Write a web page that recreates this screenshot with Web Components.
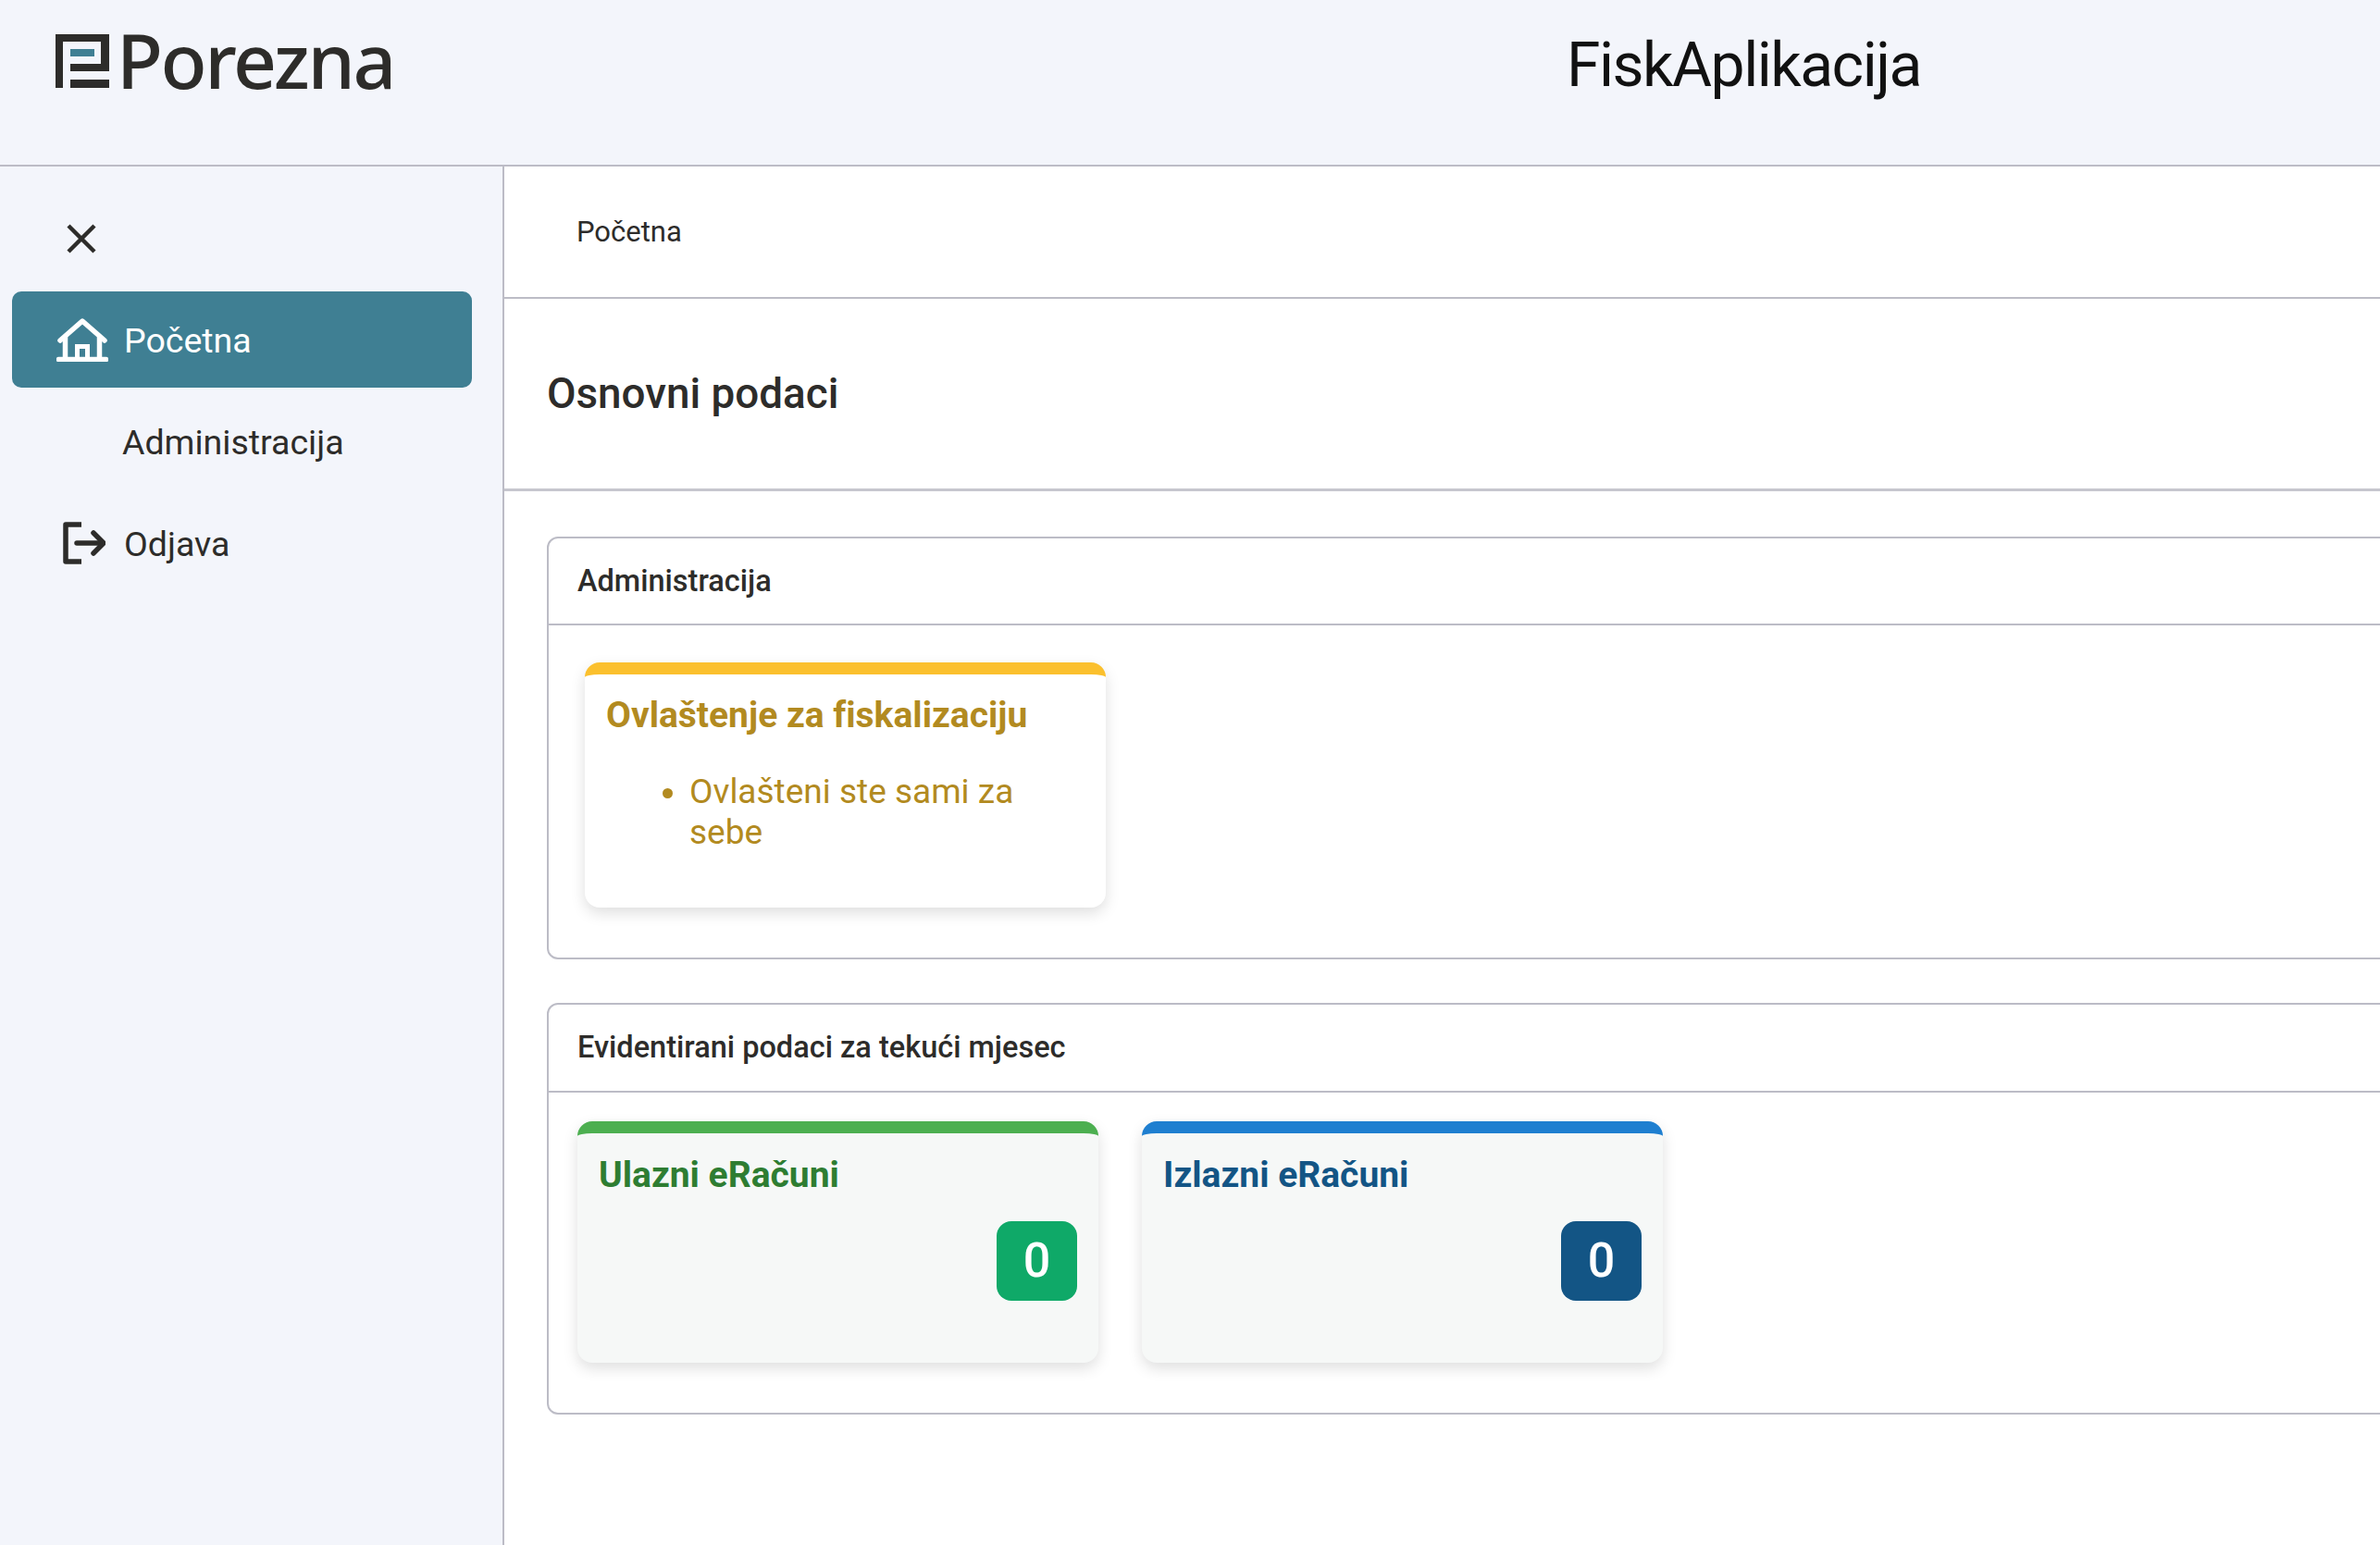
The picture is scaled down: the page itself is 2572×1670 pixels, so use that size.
<!DOCTYPE html>
<html lang="hr">
<head>
<meta charset="utf-8">
<title>FiskAplikacija</title>
<style>
  html, body { margin: 0; height: 100%; overflow: hidden; background: #fff; }
  body { font-family: Roboto, "Liberation Sans", sans-serif; color: #2d2c2a; }
</style>
</head>
<body>
<app-shell>
  <app-header slot="header" brand="Porezna" title="FiskAplikacija"></app-header>
  <side-nav slot="nav">
    <nav-item active icon="home">Početna</nav-item>
    <nav-item>Administracija</nav-item>
    <nav-item icon="logout">Odjava</nav-item>
  </side-nav>
  <page-body slot="main" crumb="Početna" heading="Osnovni podaci">
    <panel-box heading="Administracija" style="--inset:40px 0 0 39px;--body-h:359px;--title-h:94px">
      <info-card accent="#fbc02d" tone="#b28a20" bg="#fff" heading="Ovlaštenje za fiskalizaciju" style="--h:265px;--top:25px">
        <ul><li>Ovlašteni ste sami za sebe</li></ul>
      </info-card>
    </panel-box>
    <panel-box heading="Evidentirani podaci za tekući mjesec" style="--inset:31px 0 0 31px;--body-h:346px;--gap:47px;--title-h:95px">
      <info-card accent="#4caf50" tone="#2e7d32" bg="#f6f8f7" heading="Ulazni eRačuni" count="0" badge="#0fa968" style="--h:261px;--top:26px"></info-card>
      <info-card accent="#1e7fd0" tone="#135585" bg="#f6f8f7" heading="Izlazni eRačuni" count="0" badge="#135585" style="--h:261px;--top:26px"></info-card>
    </panel-box>
  </page-body>
</app-shell>

<script>
class AppShell extends HTMLElement {
  constructor() {
    super();
    this.attachShadow({ mode: "open" });
    this.shadowRoot.innerHTML = `
      <style>
        :host { display: grid; grid-template-columns: 545px 1fr; grid-template-rows: 180px 1fr; height: 1670px; width: 2572px; overflow: hidden; }
        .top { grid-column: 1 / 3; }
      </style>
      <div class="top"><slot name="header"></slot></div>
      <slot name="nav"></slot>
      <slot name="main"></slot>`;
  }
}

class AppHeader extends HTMLElement {
  constructor() {
    super();
    this.attachShadow({ mode: "open" });
  }
  connectedCallback() {
    this.shadowRoot.innerHTML = `
      <style>
        :host { display: block; box-sizing: border-box; height: 180px; background: #f3f5fb; border-bottom: 2px solid #bcbcc6; }
        .bar { display: flex; align-items: flex-start; height: 100%; padding-left: 60px; }
        svg { width: 58px; height: 58px; margin-top: 37px; flex: none; }
        .brand { font: 500 82px/1 "Noto Sans", sans-serif; color: #2d2c2a; margin: 23px 0 0 8px; width: 1567px; letter-spacing: -2.4px; }
        .name { font: 400 66px/1 Roboto, sans-serif; color: #111; margin-top: 38px; letter-spacing: -1.5px; }
      </style>
      <div class="bar">
        <svg viewBox="0 0 58 58">
          <path fill="#2d2c2a" d="M0 0H58V40H16V32H49V8H8V58H0Z"/>
          <rect x="16" y="49" width="42" height="9" fill="#2d2c2a"/>
          <rect x="16" y="16" width="26" height="8" fill="#3f7f93"/>
        </svg>
        <div class="brand">${this.getAttribute("brand")}</div>
        <div class="name">${this.getAttribute("title")}</div>
      </div>`;
  }
}

class SideNav extends HTMLElement {
  constructor() {
    super();
    this.attachShadow({ mode: "open" });
    this.shadowRoot.innerHTML = `
      <style>
        :host { display: block; box-sizing: border-box; background: #f3f5fb; border-right: 2px solid #bcbcc6; height: 1490px; padding: 0 33px 0 13px; }
        .close { display: block; width: 32px; height: 32px; margin: 62px 0 41px 59px; }
        .items { display: flex; flex-direction: column; gap: 6px; }
      </style>
      <svg class="close" viewBox="0 0 32 32"><path d="M2 2L30 30M30 2L2 30" stroke="#2d2c2a" stroke-width="4.4" fill="none"/></svg>
      <div class="items"><slot></slot></div>`;
  }
}

const NAV_ICONS = {
  home: `<svg viewBox="0 0 56 47" width="56" height="47" fill="none" stroke="currentColor" stroke-width="5.5" stroke-linejoin="round" stroke-linecap="round">
      <path d="M4 24L28 3L52 24"/><path d="M9.5 21V44M46.5 21V44"/><path d="M2.5 44.5H53.5"/><path d="M22.5 44V30.5H33.5V44" stroke-width="5" stroke-linecap="butt" stroke-linejoin="miter"/></svg>`,
  logout: `<svg viewBox="0 0 46 46" width="46" height="46" style="margin-left:7px" fill="none" stroke="currentColor" stroke-width="5.5" stroke-linejoin="round">
      <path d="M20 3H3V43H20"/><path d="M15 23H43" stroke-linecap="round"/><path d="M33 12L44 23L33 34" stroke-linecap="round"/></svg>`
};

class NavItem extends HTMLElement {
  constructor() {
    super();
    this.attachShadow({ mode: "open" });
  }
  connectedCallback() {
    const icon = this.getAttribute("icon");
    this.shadowRoot.innerHTML = `
      <style>
        :host { display: flex; align-items: center; box-sizing: border-box; height: 104px; border-radius: 10px; padding-left: 48px; font: 400 37.5px/1 Roboto, sans-serif; color: #2d2c2a; }
        :host([active]) { background: #3f7f93; color: #fff; }
        .ico { width: 73px; flex: none; display: flex; }
        .ico svg { display: block; }
        .label { padding-top: 3px; }
        .plain { margin-left: 71px; }
      </style>
      ${icon ? `<span class="ico">${NAV_ICONS[icon]}</span>` : ""}
      <span class="label ${icon ? "" : "plain"}"><slot></slot></span>`;
  }
}

class PageBody extends HTMLElement {
  constructor() {
    super();
    this.attachShadow({ mode: "open" });
  }
  connectedCallback() {
    this.shadowRoot.innerHTML = `
      <style>
        :host { display: block; min-width: 0; overflow: hidden; }
        .crumb { box-sizing: border-box; height: 143px; display: flex; align-items: center; padding: 0 0 0 78px; font: 400 31px/1 Roboto, sans-serif; border-bottom: 2px solid #bcbcc6; }
        .head { box-sizing: border-box; height: 208px; display: flex; align-items: center; padding-left: 46px; font: 500 45.8px/1 Roboto, sans-serif; border-bottom: 3px solid #c6c6ce; }
        .panels { display: flex; flex-direction: column; gap: 47px; padding: 49px 0 0 46px; width: 2200px; }
      </style>
      <div class="crumb">${this.getAttribute("crumb")}</div>
      <div class="head">${this.getAttribute("heading")}</div>
      <div class="panels"><slot></slot></div>`;
  }
}

class PanelBox extends HTMLElement {
  constructor() {
    super();
    this.attachShadow({ mode: "open" });
  }
  connectedCallback() {
    this.shadowRoot.innerHTML = `
      <style>
        :host { display: block; box-sizing: border-box; border: 2px solid #bcbcc6; border-radius: 12px; }
        .title { box-sizing: border-box; height: var(--title-h); display: flex; align-items: center; padding-left: 31px; font: 500 32.5px/1 Roboto, sans-serif; border-bottom: 2px solid #bcbcc6; }
        .body { box-sizing: border-box; height: var(--body-h); padding: var(--inset); display: flex; align-items: flex-start; gap: var(--gap, 0); }
      </style>
      <div class="title">${this.getAttribute("heading")}</div>
      <div class="body"><slot></slot></div>`;
  }
}

class InfoCard extends HTMLElement {
  constructor() {
    super();
    this.attachShadow({ mode: "open" });
  }
  connectedCallback() {
    const tone = this.getAttribute("tone");
    const count = this.getAttribute("count");
    this.shadowRoot.innerHTML = `
      <style>
        :host { display: block; box-sizing: border-box; width: 563px; height: var(--h); border-radius: 16px; border-top: 13px solid ${this.getAttribute("accent")}; background: ${this.getAttribute("bg")}; box-shadow: 0 6px 16px rgba(0,0,0,.13); padding: 0 23px; color: ${tone}; position: relative; }
        h3 { margin: var(--top) 0 0; font: 700 39px/1 Roboto, sans-serif; font-variant-ligatures: none; color: ${tone}; }
        .badge { position: absolute; right: 23px; top: 95px; width: 87px; height: 86px; border-radius: 16px; display: flex; align-items: center; justify-content: center; background: ${this.getAttribute("badge")}; color: #fff; font: 500 52px/1 Roboto, sans-serif; }
        ::slotted(ul) { margin: 41px 0 0; padding: 0 0 0 90px; font: 400 37px/44px Roboto, sans-serif; }
      </style>
      <h3>${this.getAttribute("heading")}</h3>
      <div class="list"><slot></slot></div>
      ${count !== null ? `<div class="badge">${count}</div>` : ""}`;
  }
}

customElements.define("app-shell", AppShell);
customElements.define("app-header", AppHeader);
customElements.define("side-nav", SideNav);
customElements.define("nav-item", NavItem);
customElements.define("page-body", PageBody);
customElements.define("panel-box", PanelBox);
customElements.define("info-card", InfoCard);
</script>
</body>
</html>
